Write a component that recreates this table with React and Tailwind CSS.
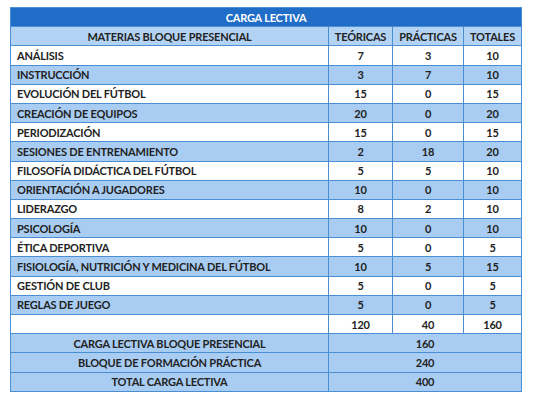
const MATERIAS = [
    ["ANÁLISIS", 7, 3, 10],
    ["INSTRUCCIÓN", 3, 7, 10],
    ["EVOLUCIÓN DEL FÚTBOL", 15, 0, 15],
    ["CREACIÓN DE EQUIPOS", 20, 0, 20],
    ["PERIODIZACIÓN", 15, 0, 15],
    ["SESIONES DE ENTRENAMIENTO", 2, 18, 20],
    ["FILOSOFÍA DIDÁCTICA DEL FÚTBOL", 5, 5, 10],
    ["ORIENTACIÓN A JUGADORES", 10, 0, 10],
    ["LIDERAZGO", 8, 2, 10],
    ["PSICOLOGÍA", 10, 0, 10],
    ["ÉTICA DEPORTIVA", 5, 0, 5],
    ["FISIOLOGÍA, NUTRICIÓN Y MEDICINA DEL FÚTBOL", 10, 5, 15],
    ["GESTIÓN DE CLUB", 5, 0, 5],
    ["REGLAS DE JUEGO", 5, 0, 5],
];

const RESUMEN = [
    ["CARGA LECTIVA BLOQUE PRESENCIAL", 160],
    ["BLOQUE DE FORMACIÓN PRÁCTICA", 240],
    ["TOTAL CARGA LECTIVA", 400],
];

const cell = "border border-[#4a8fd4] h-[19.2px] p-0 leading-none";

export default function App() {
    return (
        <div className="w-[534px] h-[402px] bg-white pt-[7px] pl-[10px] text-[#222] text-[11px] font-bold tracking-[-0.2px]" style={{ fontFamily: "Lato, 'Open Sans', sans-serif" }}>
            <table className="border-collapse table-fixed w-[511px] border border-[#4a8fd4]">
                <colgroup>
                    <col className="w-[318px]" />
                    <col className="w-[64px]" />
                    <col className="w-[71px]" />
                    <col className="w-[58px]" />
                </colgroup>
                <tbody>
                    {/* Title */}
                    <tr className="bg-[#1f6dc6]">
                        <td colSpan={4} className={`${cell} text-center text-white`}>CARGA LECTIVA</td>
                    </tr>
                    <tr className="bg-[#b3d3f4]">
                        <td className={`${cell} text-center`}>MATERIAS BLOQUE PRESENCIAL</td>
                        <td className={`${cell} text-center`}>TEÓRICAS</td>
                        <td className={`${cell} text-center`}>PRÁCTICAS</td>
                        <td className={`${cell} text-center`}>TOTALES</td>
                    </tr>
                    {MATERIAS.map(([name, t, p, tot], i) => (
                        <tr key={name} className={i % 2 ? "bg-[#a9cdf2]" : "bg-white"}>
                            <td className={`${cell} pl-[6px] whitespace-nowrap`}>{name}</td>
                            <td className={`${cell} text-center`}>{t}</td>
                            <td className={`${cell} text-center`}>{p}</td>
                            <td className={`${cell} text-center`}>{tot}</td>
                        </tr>
                    ))}
                    {/* Totals */}
                    <tr className="bg-white">
                        <td className={cell}></td>
                        <td className={`${cell} text-center`}>120</td>
                        <td className={`${cell} text-center`}>40</td>
                        <td className={`${cell} text-center`}>160</td>
                    </tr>
                    {RESUMEN.map(([label, val]) => (
                        <tr key={label} className="bg-[#a9cdf2]">
                            <td className={`${cell} text-center`}>{label}</td>
                            <td colSpan={3} className={`${cell} text-center`}>{val}</td>
                        </tr>
                    ))}
                </tbody>
            </table>
        </div>
    );
}
